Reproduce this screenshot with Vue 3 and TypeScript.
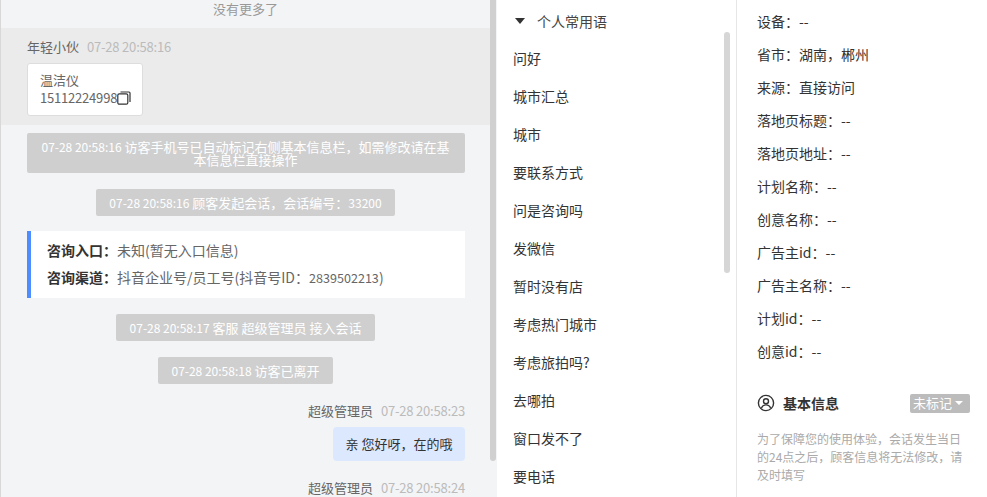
<script setup lang="ts">
const phrases = ['问好','城市汇总','城市','要联系方式','问是咨询吗','发微信','暂时没有店','考虑热门城市','考虑旅拍吗?','去哪拍','窗口发不了','要电话']
const fields = ['设备：--','省市：湖南，郴州','来源：直接访问','落地页标题：--','落地页地址：--','计划名称：--','创意名称：--','广告主id：--','广告主名称：--','计划id：--','创意id：--']
</script>

<template>
  <div class="page">
    <section class="chat">
      <div class="no-more">没有更多了</div>
      <div class="visitor">
        <div class="meta"><span class="name">年轻小伙</span><span class="time">07-28 20:58:16</span></div>
        <div class="card">
          <div>温洁仪</div>
          <div class="phone">15112224998<svg class="copy" width="14" height="14" viewBox="0 0 14 14" fill="none" stroke="#333" stroke-width="1.2"><rect x="0.8" y="2.8" width="10" height="10.4" rx="1.5"/><path d="M3.5 1h8.5a1 1 0 0 1 1 1v9"/></svg></div>
        </div>
      </div>
      <div class="sys wide"><span class="num">07-28 20:58:16</span> 访客手机号已自动标记右侧基本信息栏，如需修改请在基本信息栏直接操作</div>
      <div class="sys s2"><span class="num">07-28 20:58:16</span> 顾客发起会话，会话编号：<span class="num">33200</span></div>
      <div class="info">
        <div class="info-row"><b>咨询入口：</b>未知(暂无入口信息)</div>
        <div class="info-row"><b>咨询渠道：</b>抖音企业号/员工号(抖音号ID：<span class="digits">2839502213</span>)</div>
      </div>
      <div class="sys"><span class="num">07-28 20:58:17</span> 客服 超级管理员 接入会话</div>
      <div class="sys"><span class="num">07-28 20:58:18</span> 访客已离开</div>
      <div class="meta right m1"><span class="name">超级管理员</span><span class="time">07-28 20:58:23</span></div>
      <div class="bubble">亲 您好呀，在的哦</div>
      <div class="meta right m2"><span class="name">超级管理员</span><span class="time">07-28 20:58:24</span></div>
      <i class="chat-thumb"></i>
    </section>

    <section class="phrases">
      <div class="ph-title"><i class="caret"></i><span>个人常用语</span></div>
      <ul class="ph-list">
        <li v-for="p in phrases" :key="p">{{ p }}</li>
      </ul>
      <i class="ph-thumb"></i>
    </section>

    <section class="detail">
      <div class="field" v-for="f in fields" :key="f">{{ f }}</div>
      <div class="head">
        <svg width="18" height="18" viewBox="0 0 18 18" fill="none" stroke="#333" stroke-width="1.4"><circle cx="9" cy="9" r="7.6"/><circle cx="9" cy="7.2" r="2.5"/><path d="M4.4 14.2c.8-2.2 2.5-3.3 4.6-3.3s3.800 1.100 4.600 3.300"/></svg>
        <strong>基本信息</strong>
        <span class="tag">未标记<i></i></span>
      </div>
      <p class="note">为了保障您的使用体验，会话发生当日的24点之后，顾客信息将无法修改，请及时填写</p>
    </section>
  </div>
</template>

<style>
html, body { margin: 0; background: #fff; }
</style>

<style scoped>
.page { width: 987px; height: 497px; overflow: hidden; display: flex; font: 13px/18px "Noto Sans CJK SC", "Open Sans", sans-serif; color: #333; }
.chat { position: relative; box-sizing: border-box; width: 497px; height: 497px; flex: none; overflow: hidden; background: #f3f4f6; border-left: 1px solid #d8d8d8; padding-right: 7px; }
.no-more { height: 28px; line-height: 18px; text-align: center; color: #999; }
.visitor { background: #ebebeb; height: 97px; box-sizing: border-box; padding: 10px 26px 0; }
.meta { display: flex; gap: 8px; height: 18px; align-items: center; }
.name { color: #666; }
.time { color: #bbb; letter-spacing: -0.2px; }
.card { box-sizing: border-box; width: 116px; height: 53px; margin-top: 7px; padding: 7px 12px; background: #fff; border: 1px solid #ddd; border-radius: 3px; color: #666; }
.phone { display: flex; align-items: center; letter-spacing: -0.2px; }
.copy { flex: none; }
.sys { width: fit-content; margin: 16px auto 0; padding: 4px 13.5px; border-radius: 2px; background: #cfcfcf; color: #fff; text-align: center; line-height: 19px; }
.num { font-size: 12px; }
.wide { width: 438px; box-sizing: border-box; margin-top: 8px; padding: 7px 12px; line-height: 13px; }
.s2 { margin-top: 16px; }
.info { box-sizing: border-box; height: 67px; margin: 15px 25px 0 26px; padding: 6px 16px 0; border-left: 4px solid #4d8dff; background: #fff; color: #666; font-size: 14px; }
.info-row { height: 27px; line-height: 27px; }
.info b { color: #333; font-weight: 700; }
.digits { font-size: 12.6px; }
.right { justify-content: flex-end; margin-right: 25px; }
.m1 { margin-top: 18px; }
.bubble { box-sizing: border-box; width: 132px; height: 34px; margin: 7px 25px 0 auto; border-radius: 4px; background: #dce8fe; text-align: center; line-height: 34px; }
.m2 { margin-top: 18px; }
.chat-thumb { position: absolute; left: 489px; top: 0; width: 6px; height: 461px; border-radius: 0 0 3px 3px; background: #d0d0d0; }

.phrases { position: relative; box-sizing: border-box; width: 240px; height: 497px; flex: none; overflow: hidden; background: #fff; border-right: 1px solid #e6e6e6; font-size: 14px; }
.ph-title { display: flex; align-items: center; height: 42px; padding-left: 18px; color: #444; }
.caret { width: 0; height: 0; margin-right: 12px; border: 5.500px solid transparent; border-top: 6px solid #333; border-bottom: 0; }
.ph-list { list-style: none; margin: 0; padding: 1px 0 0 16px; }
.ph-list li { height: 38px; line-height: 30px; color: #333; }
.ph-thumb { position: absolute; left: 227px; top: 32px; width: 6px; height: 241px; border-radius: 3px; background: #d6d6d6; }

.detail { width: 250px; box-sizing: border-box; padding: 6px 17px 0 20px; flex: none; font-size: 14px; }
.field { height: 33px; line-height: 31px; color: #333; }
.head { display: flex; align-items: center; gap: 8px; margin-top: 23px; height: 22px; }
.head strong { font-weight: 700; color: #333; }
.tag { display: flex; align-items: center; gap: 3px; box-sizing: border-box; width: 60px; height: 19px; padding-left: 3px; margin-left: auto; border-radius: 2px; background: #bcbcbc; color: #fff; font-size: 13px; }
.tag i { width: 0; height: 0; border: 4px solid transparent; border-top: 4px solid #fff; border-bottom: 0; }
.note { margin: 16px 0 0; font-size: 12px; line-height: 18px; color: #aaa; }
</style>
